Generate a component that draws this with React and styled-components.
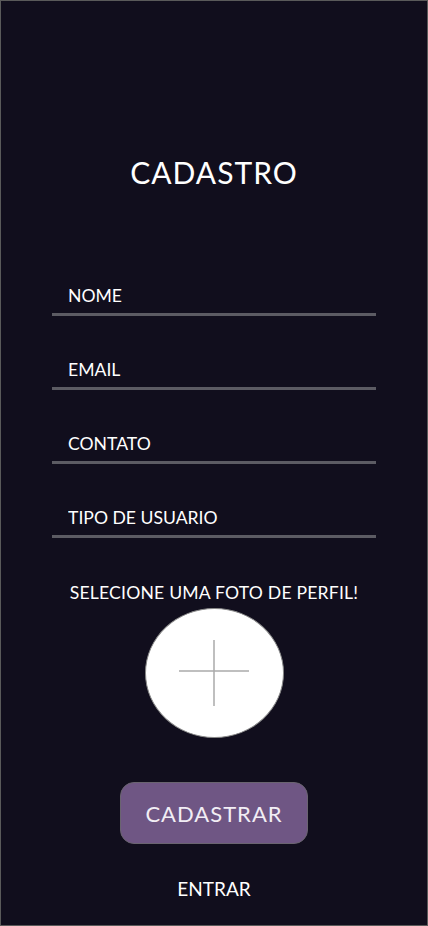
import React, { useState } from "react";
import styled, { createGlobalStyle } from "styled-components";

const GlobalStyle = createGlobalStyle`
  * { box-sizing: border-box; }
  body {
    margin: 0;
    background: #110e1d;
    font-family: "Lato", "Noto Sans", sans-serif;
  }
`;

const fields = ["NOME", "EMAIL", "CONTATO", "TIPO DE USUARIO"];

const App = () => {
  const [form, setForm] = useState({});

  return (
    <>
      <GlobalStyle />
      <Page>
        <Title>CADASTRO</Title>
        <Form>
          {fields.map((f) => (
            <Field
              key={f}
              placeholder={f}
              value={form[f] || ""}
              onChange={(e) => setForm((prev) => ({ ...prev, [f]: e.target.value }))}
            />
          ))}
        </Form>
        <PhotoLabel>SELECIONE UMA FOTO DE PERFIL!</PhotoLabel>
        <PhotoPicker type="button">
          <svg width="70" height="66" viewBox="0 0 70 66">
            <path d="M35 0V66M0 31H70" stroke="#aaaaaa" strokeWidth="1.5" />
          </svg>
        </PhotoPicker>
        <SubmitButton type="button">CADASTRAR</SubmitButton>
        <LinkButton type="button">ENTRAR</LinkButton>
      </Page>
    </>
  );
};

export default App;

const Page = styled.div`
  width: 428px;
  height: 926px;
  border: 1px solid #5a5a5a;
  display: flex;
  flex-direction: column;
  align-items: center;
  padding-top: 152px;
`;

const Title = styled.h1`
  margin: 0;
  color: #ffffff;
  font-size: 30px;
  font-weight: 400;
  letter-spacing: 1px;
  line-height: 38px;
`;

const Form = styled.div`
  width: 324px;
  margin-top: 89px;
  display: flex;
  flex-direction: column;
  gap: 38px;
`;

const Field = styled.input`
  width: 100%;
  height: 36px;
  background: none;
  border: none;
  border-bottom: 3px solid #5c5b63;
  padding: 0 16px 3px;
  color: #ffffff;
  font-family: inherit;
  font-size: 17.6px;
  outline: none;

  &::placeholder {
    color: #ffffff;
  }
`;

const PhotoLabel = styled.p`
  margin: 44px 0 0;
  color: #ffffff;
  font-size: 17.6px;
  letter-spacing: 0.2px;
  line-height: 22px;
`;

const PhotoPicker = styled.button`
  width: 139px;
  height: 130px;
  margin-top: 4px;
  border-radius: 50%;
  border: 1px solid #888888;
  background: #ffffff;
  display: flex;
  align-items: center;
  justify-content: center;
  cursor: pointer;
  padding: 0;
`;

const SubmitButton = styled.button`
  width: 188px;
  height: 62px;
  margin-top: 44px;
  background: #6f5684;
  border: 1px solid #6a6470;
  border-radius: 14px;
  color: #f2eef5;
  font-family: inherit;
  font-size: 22px;
  letter-spacing: 1px;
  cursor: pointer;
`;

const LinkButton = styled.button`
  margin-top: 32px;
  background: none;
  border: none;
  color: #ffffff;
  font-family: inherit;
  font-size: 19px;
  cursor: pointer;
`;
